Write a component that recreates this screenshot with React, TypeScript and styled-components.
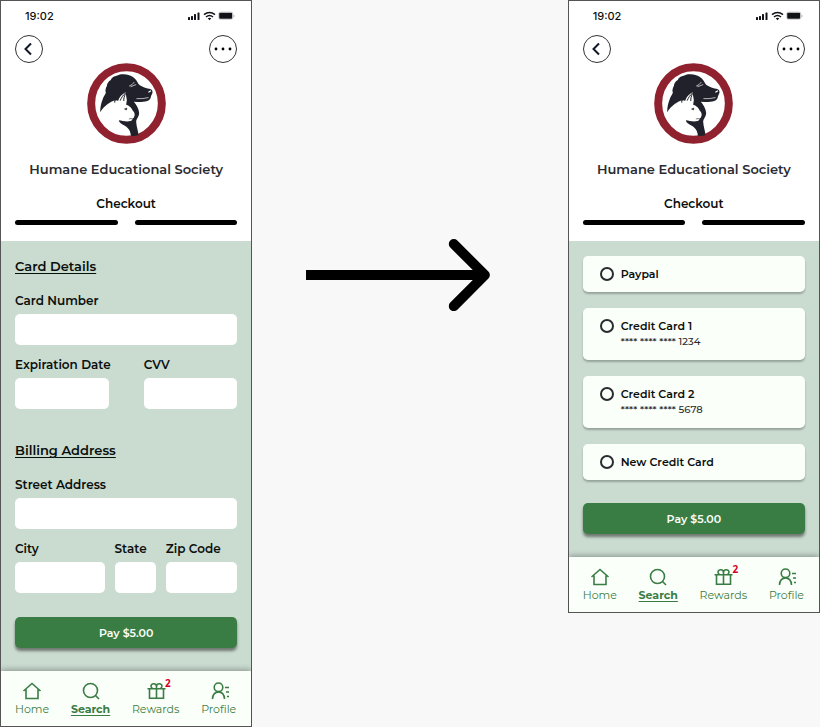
import React, { useId } from 'react';
import styled, { createGlobalStyle } from 'styled-components';

const GlobalStyle = createGlobalStyle`
  *, *::before, *::after { box-sizing: border-box; }
  body {
    margin: 0;
    background: #f8f8f8;
    color: #0b0f0c;
    font-family: Montserrat, Inter, "Liberation Sans", sans-serif;
  }
  button, input { font: inherit; color: inherit; }
  h1, h2, h3, p, ul { margin: 0; padding: 0; }
`;

const Flow = styled.main`
  display: grid;
  grid-template-columns: 4fr 5fr 4fr;
  align-items: start;
`;

const Phone = styled.section`
  display: flex;
  flex-direction: column;
  border: 1px solid #555;
  background: #fff;
`;

const Connector = styled.div`
  padding: 239px 77px 0 54px;
  svg { display: block; width: 100%; }
`;

const Header = styled.header`
  display: flex;
  flex-direction: column;
  padding: 0 14px 16px;
`;

const StatusBar = styled.div`
  display: flex;
  align-items: center;
  justify-content: space-between;
  height: 29px;
  padding: 0 2px 0 10px;
  font: 500 11px/16px Inter, sans-serif;
  svg { display: block; }
`;

const Toolbar = styled.div`
  display: flex;
  justify-content: space-between;
  margin-top: 5px;
`;

const RoundButton = styled.button`
  display: grid;
  place-items: center;
  width: 28px;
  height: 28px;
  padding: 0;
  border: 1px solid #333;
  border-radius: 50%;
  background: #fff;
`;

const LogoMark = styled.svg`
  display: block;
  align-self: center;
  width: 79px;
  height: 81px;
`;

const OrgName = styled.h1`
  margin-top: 15px;
  font-size: 13px;
  font-weight: 600;
  line-height: 20px;
  text-align: center;
  white-space: nowrap;
  color: #2a2b30;
`;

const StepTitle = styled.h2`
  margin-top: 16px;
  font-size: 12px;
  font-weight: 600;
  line-height: 18px;
  text-align: center;
`;

const Steps = styled.div`
  display: grid;
  grid-template-columns: 1fr 1fr;
  gap: 17px;
  margin-top: 7px;
`;

const Step = styled.span`
  height: 5px;
  border-radius: 3px;
  background: #000;
`;

const Body = styled.form`
  display: flex;
  flex-direction: column;
  padding: 15px 14px 23px;
  background: #cadbd0;
`;

const Group = styled.div`
  display: flex;
  flex-direction: column;
  gap: 11px;
  margin-bottom: 31px;
  &:last-of-type { margin-bottom: 24px; }
`;

const GroupTitle = styled.h3`
  margin-bottom: 5px;
  font-size: 13px;
  font-weight: 600;
  line-height: 20px;
  text-decoration: underline;
  text-decoration-thickness: 1px;
  text-underline-offset: 2px;
`;

const FieldRow = styled.div<{ $columns: string; $gap: number }>`
  display: grid;
  grid-template-columns: ${(p) => p.$columns};
  gap: ${(p) => p.$gap}px;
`;

const FieldLabel = styled.label`
  display: flex;
  flex-direction: column;
  gap: 4px;
  min-width: 0;
  font-size: 12px;
  font-weight: 600;
  line-height: 18px;
  white-space: nowrap;
`;

const TextBox = styled.input`
  width: 100%;
  height: 31px;
  padding: 0 8px;
  border: 0;
  border-radius: 5px;
  background: #fff;
`;

const PayButton = styled.button`
  height: 31px;
  border: 0;
  border-radius: 5px;
  background: #3a7d44;
  box-shadow: 0 3px 3px rgba(0, 0, 0, 0.45);
  color: #fafffa;
  font-size: 11px;
  font-weight: 600;
`;

const Options = styled.div`
  display: flex;
  flex-direction: column;
  gap: 16px;
  margin-bottom: 23px;
`;

const Option = styled.label`
  display: grid;
  grid-template-columns: 14px 1fr;
  column-gap: 7px;
  align-items: center;
  padding: 10px 17px;
  border-radius: 5px;
  background: #fafffa;
  box-shadow: 0 2px 2px rgba(0, 0, 0, 0.25);
  font-size: 11px;
  line-height: 16px;
`;

const Radio = styled.input`
  appearance: none;
  width: 14px;
  height: 14px;
  margin: 0;
  border: 2px solid #2a2b30;
  border-radius: 50%;
  &:checked { background: #3a7d44; }
`;

const OptionName = styled.span`
  font-weight: 600;
`;

const OptionNumber = styled.span`
  grid-column: 2;
  font-size: 10px;
  font-weight: 500;
  color: #2a2b30;
`;

const NavBar = styled.nav`
  position: relative;
  display: flex;
  justify-content: space-between;
  height: 55px;
  padding: 10px 15px 0 14px;
  background: #fafffa;
  box-shadow: 0 -1px 6px rgba(0, 0, 0, 0.35);
  clip-path: inset(-8px 0 0 0);
`;

const NavLink = styled.a<{ $active?: boolean }>`
  position: relative;
  display: flex;
  flex-direction: column;
  align-items: center;
  color: #3a7d44;
  font-size: 11px;
  font-weight: ${(p) => (p.$active ? 700 : 400)};
  line-height: 16px;
  text-decoration: ${(p) => (p.$active ? 'underline' : 'none')};
  text-underline-offset: 2px;
  svg { display: block; width: 20px; height: 20px; }
`;

const Badge = styled.span`
  position: absolute;
  top: -6px;
  left: 33px;
  color: #d6001c;
  font: 700 10px/16px "Open Sans", sans-serif;
`;

function StatusIcons() {
  return (
    <svg width="48" height="10" viewBox="0 0 48 10" fill="#111216" aria-hidden="true">
      <rect x="1" y="6" width="2" height="3" rx="0.5" />
      <rect x="4" y="5" width="2" height="4" rx="0.5" />
      <rect x="7" y="3" width="2" height="6" rx="0.5" />
      <rect x="10.500" y="1.500" width="2" height="7.500" rx="0.5" />
      <g fill="none" stroke="#111216" strokeWidth="1.500">
        <path d="M17 3.700Q22.500 -0.700 28 3.700" />
        <path d="M19 6Q22.500 3.100 26 6" />
      </g>
      <path d="M20.700 7.300Q22.500 6 24.300 7.300L22.500 9.300Z" />
      <rect x="31.500" y="1" width="14.500" height="7.500" rx="2" fill="none" stroke="#bbb" strokeWidth="0.6" />
      <rect x="32.200" y="1.700" width="13" height="6" rx="1" />
      <path d="M47 4V6" stroke="#bbb" />
    </svg>
  );
}

function Logo() {
  return (
    <LogoMark viewBox="20 15 236 243" role="img" aria-label="Dog and cat emblem">
      <ellipse cx="138" cy="136.500" rx="106" ry="109" fill="#fff" stroke="#8f222e" strokeWidth="24" />
      <path
        fill="#20212a"
        d="M59 163C59 148 62 136 66 125C69 115 74 110 76 104C73 98 76 90 79 84C80 76 84 70 91 66C93 60 98 56 106 54C112 53 117 50 122 49C135 47 147 50 156 56C165 61 170 69 174 78C184 88 199 90 211 94C218 98 217 106 213 111C210 116 212 122 205 127C195 134 176 132 160 131C167 139 175 151 176 165C175 178 168 181 167 191C168 207 173 218 174 231Q164 235 151 233C150 217 143 209 133 203C123 199 116 194 115 187C126 189 140 192 150 189C158 187 154 182 159 180C165 171 163 164 157 158C151 145 143 142 137 140L139 126L135 103C124 109 117 117 113 128L105 127C91 130 72 142 59 163Z"
      />
      <path
        d="M103 134C101 126 106 124 111 121M119 128C123 119 127 112 134 106M130 129C129 121 132 114 135 106"
        fill="none"
        stroke="#20212a"
        strokeWidth="3"
      />
      <g fill="none" stroke="#fff" strokeLinecap="round" strokeWidth="2">
        <path d="M147 84Q156 81 161 73M151 86L166 80M169 122Q188 123 203 119" />
        <path d="M205 102L210 99" strokeWidth="4" />
      </g>
      <path d="M132 153L139 150L138 156ZM145 183Q151 181 157 183" fill="#20212a" stroke="#20212a" strokeWidth="1.500" />
    </LogoMark>
  );
}

function PhoneHeader() {
  return (
    <Header>
      <StatusBar>
        <span>19:02</span>
        <StatusIcons />
      </StatusBar>
      <Toolbar>
        <RoundButton type="button" aria-label="Back">
          <svg width="14" height="14" viewBox="0 0 14 14" fill="none" stroke="#101828" strokeWidth="2">
            <path d="M9 1.500L3.500 7L9 12.500" />
          </svg>
        </RoundButton>
        <RoundButton type="button" aria-label="More">
          <svg width="18" height="4" viewBox="0 0 18 4" fill="#000">
            <circle cx="2" cy="2" r="1.400" />
            <circle cx="9" cy="2" r="1.400" />
            <circle cx="16" cy="2" r="1.400" />
          </svg>
        </RoundButton>
      </Toolbar>
      <Logo />
      <OrgName>Humane Educational Society</OrgName>
      <StepTitle>Checkout</StepTitle>
      <Steps>
        <Step />
        <Step />
      </Steps>
    </Header>
  );
}

const iconProps = {
  viewBox: '0 0 20 20',
  fill: 'none',
  stroke: 'currentColor',
  strokeWidth: 1.6,
  'aria-hidden': true,
} as const;

function BottomNav() {
  return (
    <NavBar>
      <NavLink href="#home">
        <svg {...iconProps}>
          <path d="M1.500 10L10 2.500L18.500 10M4 8.500V17.500H16V8.500" />
        </svg>
        Home
      </NavLink>
      <NavLink href="#search" $active>
        <svg {...iconProps}>
          <circle cx="9.500" cy="9.500" r="7" />
          <path d="M14.500 14.500L18 18" />
        </svg>
        Search
      </NavLink>
      <NavLink href="#rewards">
        <svg {...iconProps}>
          <path d="M1.500 7.800H19.500M3.500 7.800V17.300H17.500V7.800M10.500 4.500V17.300M10.500 7.500V5.500C10.500 2 5 2 5 5C5 6.500 6 7.500 7 7.800M10.500 5.500C10.500 2 16 2 16 5C16 6.500 15 7.500 14 7.800" />
        </svg>
        Rewards
        <Badge>2</Badge>
      </NavLink>
      <NavLink href="#profile">
        <svg {...iconProps}>
          <circle cx="9.500" cy="6.300" r="4.300" />
          <path d="M3.500 18C3.500 8.500 15.500 8.500 15.500 18M16 6.500H21M17 11H21M18 15.500H21" />
        </svg>
        Profile
      </NavLink>
    </NavBar>
  );
}

function Field({ label }: { label: string }) {
  const id = useId();
  return (
    <FieldLabel htmlFor={id}>
      {label}
      <TextBox id={id} type="text" />
    </FieldLabel>
  );
}

const paymentOptions = [
  { name: 'Paypal' },
  { name: 'Credit Card 1', number: '**** **** **** 1234' },
  { name: 'Credit Card 2', number: '**** **** **** 5678' },
  { name: 'New Credit Card' },
];

export default function App() {
  return (
    <>
      <GlobalStyle />
      <Flow>
        <Phone>
          <PhoneHeader />
          <Body>
            <Group>
              <GroupTitle>Card Details</GroupTitle>
              <Field label="Card Number" />
              <FieldRow $columns="1fr 1fr" $gap={35}>
                <Field label="Expiration Date" />
                <Field label="CVV" />
              </FieldRow>
            </Group>
            <Group>
              <GroupTitle>Billing Address</GroupTitle>
              <Field label="Street Address" />
              <FieldRow $columns="89fr 41fr 71fr" $gap={10}>
                <Field label="City" />
                <Field label="State" />
                <Field label="Zip Code" />
              </FieldRow>
            </Group>
            <PayButton type="button">Pay $5.00</PayButton>
          </Body>
          <BottomNav />
        </Phone>
        <Connector>
          <svg viewBox="0 0 184 72" fill="none" stroke="#000" strokeWidth="10" aria-hidden="true">
            <path d="M0 36H176" />
            <path d="M147.500 5L178.500 36L147.500 67" strokeLinecap="round" strokeLinejoin="round" />
          </svg>
        </Connector>
        <Phone>
          <PhoneHeader />
          <Body>
            <Options role="radiogroup" aria-label="Payment method">
              {paymentOptions.map((option) => (
                <Option key={option.name}>
                  <Radio type="radio" name="payment" />
                  <OptionName>{option.name}</OptionName>
                  {option.number && <OptionNumber>{option.number}</OptionNumber>}
                </Option>
              ))}
            </Options>
            <PayButton type="button">Pay $5.00</PayButton>
          </Body>
          <BottomNav />
        </Phone>
      </Flow>
    </>
  );
}
